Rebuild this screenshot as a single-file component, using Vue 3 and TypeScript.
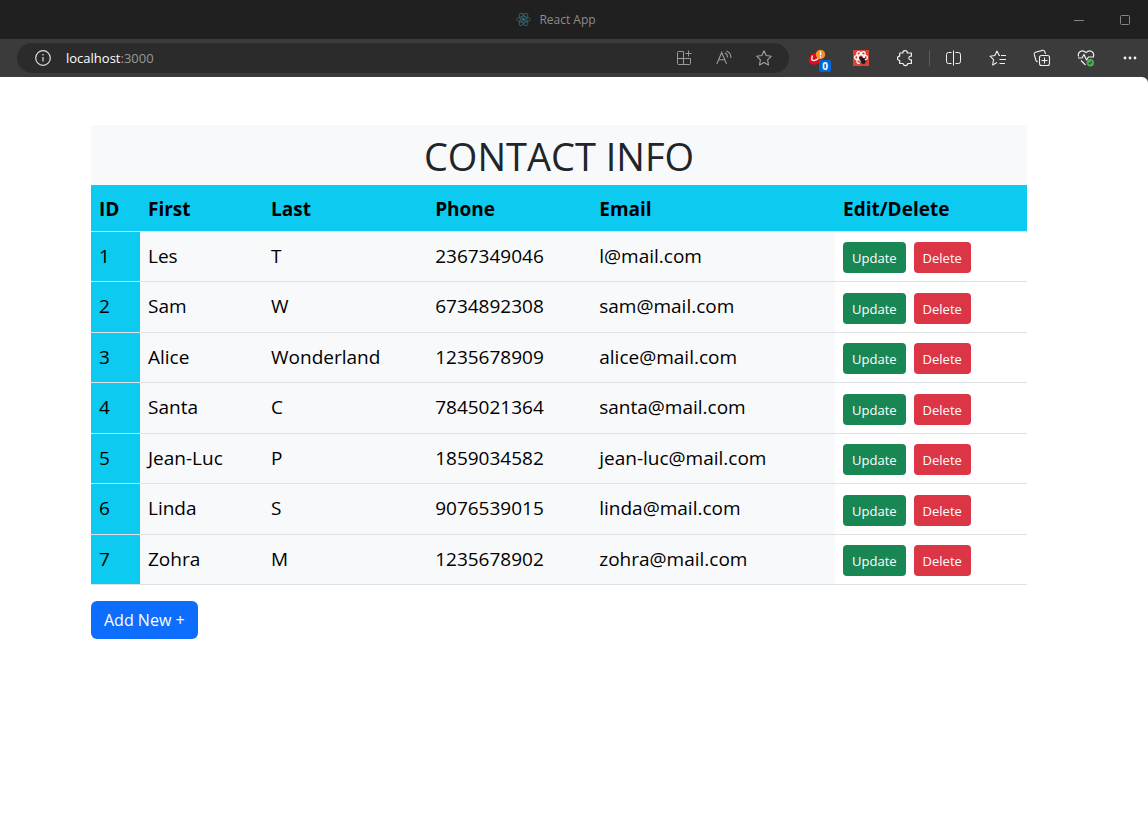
<script setup lang="ts">
import { ref } from 'vue'

interface Contact {
  id: number
  first: string
  last: string
  phone: string
  email: string
}

const contacts = ref<Contact[]>([
  { id: 1, first: 'Les', last: 'T', phone: '2367349046', email: 'l@mail.com' },
  { id: 2, first: 'Sam', last: 'W', phone: '6734892308', email: 'sam@mail.com' },
  { id: 3, first: 'Alice', last: 'Wonderland', phone: '1235678909', email: 'alice@mail.com' },
  { id: 4, first: 'Santa', last: 'C', phone: '7845021364', email: 'santa@mail.com' },
  { id: 5, first: 'Jean-Luc', last: 'P', phone: '1859034582', email: 'jean-luc@mail.com' },
  { id: 6, first: 'Linda', last: 'S', phone: '9076539015', email: 'linda@mail.com' },
  { id: 7, first: 'Zohra', last: 'M', phone: '1235678902', email: 'zohra@mail.com' },
])

function remove(id: number) {
  contacts.value = contacts.value.filter((c) => c.id !== id)
}
</script>

<template>
  <div class="window">
    <header class="titlebar">
      <div class="tab">
        <svg class="logo" width="15" height="15" viewBox="0 0 15 15" fill="none" stroke="#31606e">
          <ellipse cx="7.5" cy="7.5" rx="6.8" ry="2.7" />
          <ellipse cx="7.5" cy="7.5" rx="6.8" ry="2.7" transform="rotate(60 7.5 7.5)" />
          <ellipse cx="7.5" cy="7.5" rx="6.8" ry="2.7" transform="rotate(120 7.5 7.5)" />
          <circle cx="7.5" cy="7.5" r="1.3" fill="#3f7e90" stroke="none" />
        </svg>
        <span>React App</span>
      </div>
      <button class="win-btn" type="button" aria-label="Minimize">
        <svg width="10" height="10" viewBox="0 0 10 10" stroke="#858585"><path d="M0 5.5H10" /></svg>
      </button>
      <button class="win-btn" type="button" aria-label="Maximize">
        <svg width="10" height="10" viewBox="0 0 10 10" fill="none" stroke="#858585"><rect x=".5" y=".5" width="9" height="9" rx="1" /></svg>
      </button>
    </header>

    <nav class="toolbar">
      <div class="address">
        <button class="info" type="button" aria-label="Site information">
          <svg width="16" height="16" viewBox="0 0 16 16" fill="none" stroke="#dedede" stroke-width="1.2">
            <circle cx="8" cy="8" r="7.3" />
            <path d="M8 7V11.6" />
            <circle cx="8" cy="4.8" r=".8" fill="#dedede" stroke="none" />
          </svg>
        </button>
        <span class="url"><span class="host">localhost</span>:3000</span>
        <button class="pill-btn" type="button" aria-label="Install app">
          <svg width="16" height="16" viewBox="0 0 16 16" fill="none" stroke="#9a9a9a">
            <path d="M7.5 1.5H2.5Q1.5 1.5 1.5 2.5V13.5Q1.5 14.5 2.5 14.5H13.5Q14.5 14.5 14.5 13.5V8.5H1.5M7.5 1.5V14.5M12.5 .5V6.5M9.5 3.5H15.5" />
          </svg>
        </button>
        <button class="pill-btn" type="button" aria-label="Read aloud">
          <svg width="16" height="16" viewBox="0 0 16 16" fill="none" stroke="#9a9a9a" stroke-width="1.1" stroke-linecap="round">
            <path d="M1 13.5L5.7 2.5L10.4 13.5M2.7 9.8H8.7M9.2 3.1Q11.5 4.3 11.5 7M11 1.2Q15 3.2 14.9 7.5" />
          </svg>
        </button>
        <button class="pill-btn" type="button" aria-label="Add to favorites">
          <svg width="16" height="16" viewBox="0 0 16 16" fill="none" stroke="#a2a2a2" stroke-width="1.1" stroke-linejoin="round">
            <path d="M8 .8L10.2 5.5L15.3 6.2L11.6 9.8L12.5 15L8 12.5L3.5 15L4.4 9.8L.7 6.2L5.8 5.5Z" />
          </svg>
        </button>
      </div>

      <button class="tool ext" type="button" aria-label="Shopping extension, 0 items">
        <svg width="24" height="24" viewBox="0 0 24 24" fill="none">
          <ellipse cx="10.5" cy="12.5" rx="7.2" ry="5.6" fill="#e8081a" transform="rotate(-35 10.5 12.5)" />
          <path d="M7.5 9.5Q5 15.500 10 14.300Q12.500 13.500 13.500 12" stroke="#f7e4e5" stroke-width="1.6" />
          <circle cx="15.5" cy="8.5" r="4.7" fill="#f7902b" />
          <path d="M15.5 5.500V9.200M15.5 10.200V11.500" stroke="#fff" stroke-width="1.4" />
        </svg>
        <span class="badge">0</span>
      </button>
      <button class="tool" type="button" aria-label="React developer tools">
        <svg width="16" height="16" viewBox="0 0 16 16" fill="none">
          <rect width="16" height="16" fill="#db4437" />
          <g stroke="#fff" stroke-width="1.2">
            <ellipse cx="8" cy="7.5" rx="6.5" ry="2.6" />
            <ellipse cx="8" cy="7.5" rx="6.5" ry="2.6" transform="rotate(60 8 7.5)" />
            <ellipse cx="8" cy="7.5" rx="6.5" ry="2.6" transform="rotate(120 8 7.5)" />
          </g>
          <ellipse cx="10" cy="11" rx="2.4" ry="3.2" fill="#24191a" transform="rotate(-25 10 11)" />
          <circle cx="7.7" cy="8" r="1.6" fill="#24191a" />
          <path d="M6.5 10L12.5 8.5M7 13L13.5 11" stroke="#24191a" />
        </svg>
      </button>
      <button class="tool" type="button" aria-label="Extensions">
        <svg width="18" height="18" viewBox="0 0 18 18" fill="none" stroke="#eeeeee" stroke-width="1.2" stroke-linejoin="round">
          <path d="M3.7 4H6.8C6.8 .7 11.4 .7 11.4 4H15.4V7.2C12 6.7 12 11.2 15.4 10.8V14.5H11.7C11.6 17.2 7.4 17.2 7.1 14.5H3.7V11.5C.8 11.5 .8 7.2 3.7 7.2Z" />
        </svg>
      </button>
      <span class="divider"></span>
      <button class="tool" type="button" aria-label="Split screen">
        <svg width="16" height="16" viewBox="0 0 16 16" fill="none" stroke="#f2f2f2">
          <path d="M5.5 2.5H2.5Q.5 2.5 .5 4.5V11.5Q.5 13.5 2.5 13.5H5.5M9.5 2.5H12.5Q14.5 2.5 14.5 4.5V11.5Q14.5 13.5 12.5 13.5H9.5M7.5 .5V15.5" />
        </svg>
      </button>
      <button class="tool" type="button" aria-label="Favorites">
        <svg width="18" height="16" viewBox="0 0 18 16" fill="none" stroke="#eeeeee" stroke-width="1.1" stroke-linejoin="round">
          <path d="M11 5.5H10.2L8 1L5.8 5.5L1 6.2L4.6 9.7L3.6 15L8 12.5M12 5.5H17M10.5 9.5H17M10.5 13.5H16" />
        </svg>
      </button>
      <button class="tool" type="button" aria-label="Collections">
        <svg width="18" height="18" viewBox="0 0 18 18" fill="none" stroke="#eeeeee" stroke-width="1.1">
          <path d="M4.7 12.8Q3.2 12.5 2.8 11L1.3 5.5Q.9 3.800 2.5 3.300L9.500 1.400Q11.200 1 11.700 2.500L12.500 5" />
          <rect x="6.5" y="6.5" width="10" height="10" rx="2" fill="#3b3b3b" />
          <path d="M11.5 8.5V14.5M8.5 11.5H14.5" />
        </svg>
      </button>
      <button class="tool" type="button" aria-label="Browser essentials">
        <svg width="18" height="18" viewBox="0 0 18 18" fill="none" stroke="#eeeeee" stroke-width="1.2" stroke-linejoin="round">
          <path d="M1.7 7.5C0 3.5 5.2 -.3 9 3.6C12.8 -.3 18 3.5 16.3 7.5M1 9H5L7 5.5L9.5 11L11.5 8H17M4 11.5L8.5 16" />
          <circle cx="13.3" cy="13.7" r="3.7" fill="#4caf50" stroke="none" />
          <path d="M11.7 13.8L12.8 14.9L15 12.5" stroke="#23562a" />
        </svg>
      </button>
      <button class="tool more" type="button" aria-label="Settings and more">
        <svg width="14" height="4" viewBox="0 0 14 4" fill="#f2f2f2">
          <circle cx="2" cy="2" r="1.4" /><circle cx="7" cy="2" r="1.4" /><circle cx="12" cy="2" r="1.4" />
        </svg>
      </button>
    </nav>

    <div class="viewport">
      <main class="page">
        <h1>CONTACT INFO</h1>
        <table>
          <colgroup>
            <col class="c-id" /><col class="c-first" /><col class="c-name" /><col class="c-name" /><col class="c-email" /><col />
          </colgroup>
          <thead>
            <tr>
              <th scope="col">ID</th>
              <th scope="col">First</th>
              <th scope="col">Last</th>
              <th scope="col">Phone</th>
              <th scope="col">Email</th>
              <th scope="col">Edit/Delete</th>
            </tr>
          </thead>
          <tbody>
            <tr v-for="c in contacts" :key="c.id">
              <td class="id">{{ c.id }}</td>
              <td>{{ c.first }}</td>
              <td>{{ c.last }}</td>
              <td>{{ c.phone }}</td>
              <td>{{ c.email }}</td>
              <td class="actions">
                <div class="pair">
                  <button class="btn update" type="button">Update</button>
                  <button class="btn delete" type="button" @click="remove(c.id)">Delete</button>
                </div>
              </td>
            </tr>
          </tbody>
        </table>
        <button class="add" type="button">Add New +</button>
      </main>
    </div>
  </div>
</template>

<style>
body {
  margin: 0;
  background: #fff;
}
</style>

<style scoped>
.window {
  font-family: "Segoe UI", "Open Sans", "Noto Sans", sans-serif;
  min-height: 100vh;
  background: #3b3b3b;
  display: flex;
  flex-direction: column;
}
button {
  font-family: inherit;
  border: 0;
  padding: 0;
  background: none;
  cursor: pointer;
}
svg {
  display: block;
}
.titlebar {
  display: flex;
  height: 39px;
  background: #202020;
}
.tab {
  flex: 1;
  display: flex;
  align-items: center;
  justify-content: center;
  gap: 8px;
  padding-left: 56px;
  font-size: 12px;
  color: #8c8c8c;
}
.win-btn {
  width: 46px;
  display: flex;
  align-items: center;
  justify-content: center;
}
.toolbar {
  display: flex;
  align-items: center;
  height: 38px;
  padding-left: 17px;
}
.address {
  flex: 1;
  display: flex;
  align-items: center;
  height: 30px;
  margin-right: 6px;
  padding: 0 5px 0 18px;
  border-radius: 15px;
  background: #2b2b2b;
}
.url {
  flex: 1;
  margin-left: 15px;
  font-size: 13px;
  color: #999;
}
.host {
  color: #fff;
}
.pill-btn {
  width: 40px;
  height: 30px;
  display: flex;
  align-items: center;
  justify-content: center;
}
.tool {
  position: relative;
  width: 44px;
  height: 38px;
  display: flex;
  align-items: center;
  justify-content: center;
}
.more {
  width: 40px;
  justify-content: flex-end;
  padding-right: 11px;
}
.badge {
  position: absolute;
  left: 24px;
  top: 21px;
  width: 12px;
  height: 12px;
  border-radius: 2px;
  background: #0067d8;
  color: #fff;
  font-size: 10px;
  font-weight: 700;
  line-height: 12px;
  text-align: center;
}
.divider {
  width: 1px;
  height: 16px;
  margin: 0 2px;
  background: #5c5c5c;
}
.viewport {
  flex: 1;
  background: #fff;
  border-top-right-radius: 6px;
}
.page {
  margin: 48px 121px 24px 91px;
}
h1 {
  margin: 0;
  height: 60px;
  line-height: 62px;
  background: #f8f9fa;
  color: #212529;
  font-size: 38px;
  font-weight: 400;
  text-align: center;
}
table {
  width: 100%;
  table-layout: fixed;
  border-collapse: separate;
  border-spacing: 0;
  color: #000;
}
.c-id { width: 49px; }
.c-first { width: 13.15%; }
.c-name { width: 17.53%; }
.c-email { width: 26.05%; }
th,
td {
  box-sizing: border-box;
  padding: 9px 8px 7px;
  border-bottom: 1px solid #dee2e6;
  line-height: 30px;
  text-align: left;
  vertical-align: top;
}
th {
  height: 47px;
  background: #0dcaf0;
  font-size: 19px;
  font-weight: 700;
}
td {
  height: 50px;
  background: #f8f9fa;
  font-size: 19px;
  font-weight: 400;
}
tr:nth-child(even) td {
  height: 51px;
}
td.id {
  background: #0dcaf0;
}
td.actions {
  padding-bottom: 8px;
  background: #fff;
  vertical-align: bottom;
}
.pair {
  display: flex;
  gap: 8px;
}
.btn {
  height: 31px;
  padding: 0 9px;
  border-radius: 4px;
  color: #fff;
  font-size: 13px;
}
.update { background: #198754; }
.delete { background: #dc3545; }
.add {
  display: block;
  height: 38px;
  margin-top: 16px;
  padding: 0 13px;
  border-radius: 6px;
  background: #0d6efd;
  color: #fff;
  font-size: 16px;
}
</style>
